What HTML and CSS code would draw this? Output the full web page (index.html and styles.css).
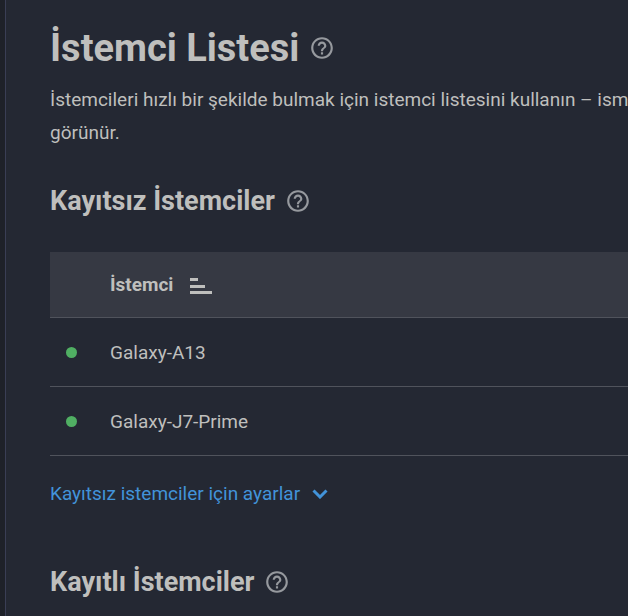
FILE: index.html
```
<!DOCTYPE html>
<html lang="tr">
<head>
  <meta charset="UTF-8">
  <meta name="viewport" content="width=device-width, initial-scale=1">
  <title>İstemci Listesi</title>
  <link rel="stylesheet" href="styles.css">
</head>
<body>
  <!-- Help icon shared by the headings -->
  <svg class="sprite" aria-hidden="true">
    <symbol id="icon-help" viewBox="0 0 24 24">
      <path d="M11 18h2v-2h-2v2zm1-16C6.480 2 2 6.480 2 12s4.480 10 10 10 10-4.480 10-10S17.520 2 12 2zm0 18c-4.410 0-8-3.590-8-8s3.590-8 8-8 8 3.590 8 8-3.590 8-8 8zm0-14c-2.210 0-4 1.790-4 4h2c0-1.100.9-2 2-2s2 .9 2 2c0 2-3 1.750-3 5h2c0-2.250 3-2.500 3-5 0-2.210-1.790-4-4-4z"/>
    </symbol>
  </svg>

  <div class="page">
    <aside class="sidebar"></aside>
    <main class="content">
      <div class="heading page-heading">
        <h1>İstemci Listesi</h1>
        <button type="button" class="help" aria-label="Yardım"><svg><use href="#icon-help"/></svg></button>
      </div>
      <p class="intro">İstemcileri hızlı bir şekilde bulmak için istemci listesini kullanın – ism<br>görünür.</p>

      <section>
        <div class="heading">
          <h2>Kayıtsız İstemciler</h2>
          <button type="button" class="help" aria-label="Yardım"><svg><use href="#icon-help"/></svg></button>
        </div>
        <table class="clients">
          <thead>
            <tr>
              <th class="status-col"></th>
              <th scope="col">
                <button type="button" class="sort">
                  İstemci
                  <svg class="sort-icon" viewBox="0 0 22 18"><path d="M0 2h8v3H0zM0 9h15v3H0zM0 15h22v3H0z"/></svg>
                </button>
              </th>
            </tr>
          </thead>
          <tbody>
            <tr>
              <td class="status-col"><span class="online"></span></td>
              <td>Galaxy-A13</td>
            </tr>
            <tr>
              <td class="status-col"><span class="online"></span></td>
              <td>Galaxy-J7-Prime</td>
            </tr>
          </tbody>
        </table>
        <button type="button" class="settings">
          Kayıtsız istemciler için ayarlar
          <svg class="chevron" viewBox="0 0 16 10"><path d="M1.500 1.500L8 8l6.500-6.500"/></svg>
        </button>
      </section>

      <section>
        <div class="heading">
          <h2>Kayıtlı İstemciler</h2>
          <button type="button" class="help" aria-label="Yardım"><svg><use href="#icon-help"/></svg></button>
        </div>
      </section>
    </main>
  </div>
</body>
</html>
```

FILE: styles.css
```
* {
  box-sizing: border-box;
}
body {
  margin: 0;
  background: #242833;
  color: #bfbfbd;
  font-family: Roboto, "Liberation Sans", sans-serif;
  font-size: 19px;
  line-height: 33px;
}
button {
  padding: 0;
  border: none;
  background: none;
  color: inherit;
  font: inherit;
  cursor: pointer;
}
.sprite {
  display: none;
}
.page {
  display: flex;
  min-height: 100vh;
  overflow: hidden;
}
.sidebar {
  flex: none;
  width: 6px;
  background: #1e2129;
  border-right: 1px solid #3a3e55;
}
.content {
  flex: 1;
  min-width: 0;
  padding: 24px 0 12px 44px;
}

/* Headings */
.heading {
  display: flex;
  align-items: center;
  gap: 10px;
  margin-bottom: 31px;
}
.page-heading {
  margin-bottom: 11px;
}
h1, h2 {
  margin: 0;
  font-weight: 700;
}
h1 {
  font-size: 38px;
  line-height: 48px;
}
h2 {
  font-size: 27px;
  line-height: 40px;
}
.help {
  display: flex;
  color: #96999e;
}
.help svg {
  width: 26px;
  height: 26px;
  fill: currentColor;
}
.intro {
  margin: 0 0 32px;
  white-space: nowrap;
}

/* Client table */
.clients {
  width: 100%;
  border-collapse: separate;
  border-spacing: 0;
}
.clients th,
.clients td {
  height: 69px;
  padding: 0;
  border-bottom: 1px solid #50535c;
  text-align: left;
}
.clients th {
  height: 66px;
  background: #363943;
}
.clients .status-col {
  width: 60px;
  padding-left: 16px;
}
.sort {
  display: flex;
  align-items: center;
  gap: 17px;
  font-weight: 700;
}
.sort-icon {
  width: 22px;
  height: 18px;
  fill: currentColor;
}
.online {
  display: block;
  width: 11px;
  height: 11px;
  border-radius: 50%;
  background: #50af63;
}
.settings {
  display: flex;
  align-items: center;
  gap: 12px;
  margin: 21px 0 52px;
  color: #4293d9;
}
.chevron {
  width: 16px;
  height: 10px;
  fill: none;
  stroke: currentColor;
  stroke-width: 3;
}
```
